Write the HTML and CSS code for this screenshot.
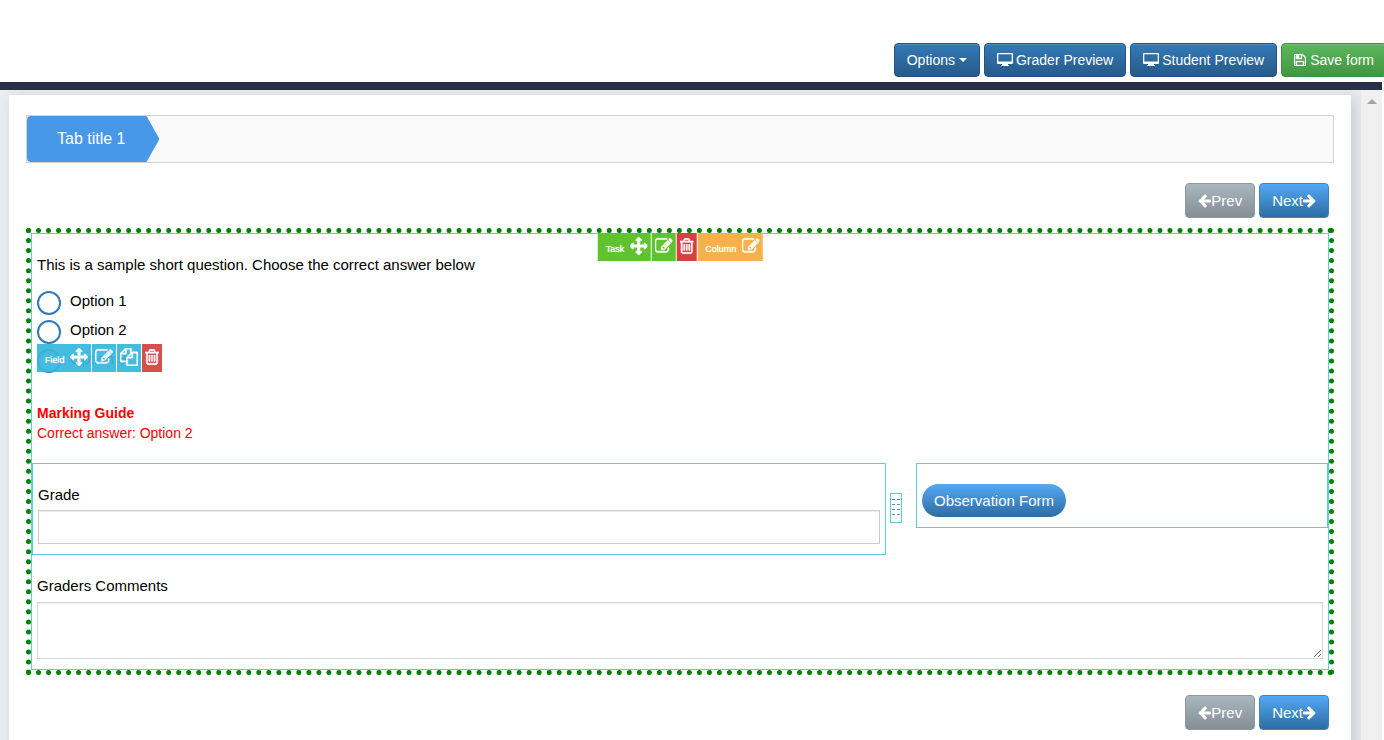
FILE: index.html
```
<!DOCTYPE html>
<html lang="en">
<head>
<meta charset="utf-8">
<title>Form builder</title>
<link rel="stylesheet" href="styles.css">
</head>
<body>
<svg class="sprite" aria-hidden="true">
  <symbol id="i-arrows" viewBox="0 0 1792 1792"><path d="M1792 896q0 26-19 45l-256 256q-19 19-45 19t-45-19-19-45v-128h-384v384h128q26 0 45 19t19 45-19 45l-256 256q-19 19-45 19t-45-19l-256-256q-19-19-19-45t19-45 45-19h128v-384h-384v128q0 26-19 45t-45 19-45-19l-256-256q-19-19-19-45t19-45l256-256q19-19 45-19t45 19 19 45v128h384v-384h-128q-26 0-45-19t-19-45 19-45l256-256q19-19 45-19t45 19l256 256q19 19 19 45t-19 45-45 19h-128v384h384v-128q0-26 19-45t45-19 45 19l256 256q19 19 19 45z"/></symbol>
  <symbol id="i-trash" viewBox="192 0 1408 1792"><path d="M704 736v576q0 14-9 23t-23 9h-64q-14 0-23-9t-9-23v-576q0-14 9-23t23-9h64q14 0 23 9t9 23zm256 0v576q0 14-9 23t-23 9h-64q-14 0-23-9t-9-23v-576q0-14 9-23t23-9h64q14 0 23 9t9 23zm256 0v576q0 14-9 23t-23 9h-64q-14 0-23-9t-9-23v-576q0-14 9-23t23-9h64q14 0 23 9t9 23zm128 724v-948h-896v948q0 22 7 40.5t14.5 27 10.5 8.5h832q3 0 10.5-8.5t14.5-27 7-40.5zm-672-1076h448l-48-117q-7-9-17-11h-317q-10 2-17 11zm928 32v64q0 14-9 23t-23 9h-96v948q0 83-47 143.5t-113 60.5h-832q-66 0-113-58.5t-47-141.5v-952h-96q-14 0-23-9t-9-23v-64q0-14 9-23t23-9h309l70-167q15-37 54-63t79-26h320q40 0 79 26t54 63l70 167h309q14 0 23 9t9 23z"/></symbol>
  <symbol id="i-edit" viewBox="0 0 1792 1792"><path d="M888 1184l116-116-152-152-116 116v56h96v96h56zm440-720q-16-16-33 1l-350 350q-17 17-1 33t33-1l350-350q17-17 1-33zm80 594v190q0 119-84.5 203.5t-203.5 84.5h-832q-119 0-203.5-84.5t-84.5-203.5v-832q0-119 84.5-203.5t203.5-84.5h832q63 0 117 25 15 7 18 23 3 17-9 29l-49 49q-14 14-32 8-23-6-45-6h-832q-66 0-113 47t-47 113v832q0 66 47 113t113 47h832q66 0 113-47t47-113v-126q0-13 9-22l64-64q15-15 35-7t20 29zm-96-738l288 288-672 672h-288v-288zm444 132l-92 92-288-288 92-92q28-28 68-28t68 28l152 152q28 28 28 68t-28 68z"/></symbol>
  <symbol id="i-copy" viewBox="0 0 1792 1792"><path d="M1696 384q40 0 68 28t28 68v1216q0 40-28 68t-68 28h-960q-40 0-68-28t-28-68v-288h-544q-40 0-68-28t-28-68v-672q0-40 20-88t48-76l408-408q28-28 76-48t88-20h416q40 0 68 28t28 68v328q68-40 128-40h416zm-544 213l-299 299h299v-299zm-640-384l-299 299h299v-299zm196 647l316-316v-416h-384v416q0 40-28 68t-68 28h-416v640h512v-256q0-40 20-88t48-76zm956 804v-1152h-384v416q0 40-28 68t-68 28h-416v640h896z"/></symbol>
  <symbol id="i-save" viewBox="128 128 1536 1536"><path d="M512 1536h768v-384h-768v384zm896 0h128v-896q0-14-10-38.5t-20-34.5l-281-281q-10-10-34-20t-39-10v416q0 40-28 68t-68 28h-576q-40 0-68-28t-28-68v-416h-128v1280h128v-416q0-40 28-68t68-28h832q40 0 68 28t28 68v416zm-384-928v-320q0-13-9.5-22.5t-22.5-9.5h-192q-13 0-22.5 9.5t-9.5 22.5v320q0 13 9.5 22.5t22.5 9.5h192q13 0 22.5-9.5t9.5-22.5zm640 32v928q0 40-28 68t-68 28h-1344q-40 0-68-28t-28-68v-1344q0-40 28-68t68-28h928q40 0 88 20t76 48l280 280q28 28 48 76t20 88z"/></symbol>
  <symbol id="i-left" viewBox="128 128 1536 1664"><path d="M1664 896v128q0 53-32.5 90.5t-84.5 37.5h-704l293 294q38 36 38 90t-38 90l-75 76q-37 37-90 37-52 0-91-37l-651-652q-37-37-37-90 0-52 37-91l651-650q38-38 91-38 52 0 90 38l75 74q38 38 38 91t-38 91l-293 293h704q52 0 84.5 37.5t32.5 90.5z"/></symbol>
  <symbol id="i-desktop" viewBox="0 0 16 14"><path fill-rule="evenodd" d="M1 0h14q1 0 1 1v9q0 1-1 1h-4v1q1 0 1 1H4q0-1 1-1v-1H1q-1 0-1-1V1q0-1 1-1zM1.300 1.300v7.200h13.400V1.300z"/></symbol>
</svg>

<header class="topbar">
  <div class="actions">
    <button class="btn primary menu" type="button">Options <span class="caret"></span></button>
    <button class="btn primary" type="button"><svg class="desktop"><use href="#i-desktop"/></svg>Grader Preview</button>
    <button class="btn primary" type="button"><svg class="desktop"><use href="#i-desktop"/></svg>Student Preview</button>
    <button class="btn success" type="button"><svg class="save"><use href="#i-save"/></svg>Save form</button>
  </div>
</header>

<div class="workspace">
  <main class="canvas">
    <section class="sheet">
      <nav class="tabs"><a class="tab" href="#tab1">Tab title 1</a></nav>

      <div class="pager">
        <button class="nav prev" type="button"><svg class="arrow"><use href="#i-left"/></svg>Prev</button>
        <button class="nav next" type="button">Next<svg class="arrow flip"><use href="#i-left"/></svg></button>
      </div>

      <form class="task" id="tab1">
        <div class="column">
          <div class="tools task-tools">
            <button class="tool green wide" type="button">Task<svg><use href="#i-arrows"/></svg></button>
            <button class="tool green" type="button" aria-label="Edit task"><svg><use href="#i-edit"/></svg></button>
            <button class="tool red" type="button" aria-label="Delete task"><svg class="trash"><use href="#i-trash"/></svg></button>
            <button class="tool orange wide" type="button">Column<svg><use href="#i-edit"/></svg></button>
          </div>

          <fieldset class="question">
            <legend>This is a sample short question. Choose the correct answer below</legend>
            <label class="option"><input type="radio" name="answer"><span>Option 1</span></label>
            <label class="option"><input type="radio" name="answer"><span>Option 2</span></label>
            <label class="option"><input type="radio" name="answer"><span>Option 3</span></label>
            <div class="tools field-tools">
              <button class="tool blue wide" type="button">Field<svg><use href="#i-arrows"/></svg></button>
              <button class="tool blue" type="button" aria-label="Edit field"><svg><use href="#i-edit"/></svg></button>
              <button class="tool blue" type="button" aria-label="Copy field"><svg><use href="#i-copy"/></svg></button>
              <button class="tool red" type="button" aria-label="Delete field"><svg class="trash"><use href="#i-trash"/></svg></button>
            </div>
          </fieldset>

          <div class="guide"><strong>Marking Guide</strong><span>Correct answer: Option 2</span></div>

          <div class="split">
            <div class="cell">
              <label for="grade">Grade</label>
              <input class="text" id="grade" type="text">
            </div>
            <svg class="grip" viewBox="0 0 12 30" aria-hidden="true">
              <rect x=".5" y=".5" width="11" height="29"/>
              <path d="M2 6.500h3M7 6.500h3M2 11.500h3M7 11.500h3M2 16.500h3M7 16.500h3M2 21.500h3M7 21.500h3"/>
            </svg>
            <div class="cell side">
              <button class="pill" type="button">Observation Form</button>
            </div>
          </div>

          <div class="comments">
            <label for="comments">Graders Comments</label>
            <textarea id="comments"></textarea>
          </div>
        </div>
      </form>

      <div class="pager">
        <button class="nav prev" type="button"><svg class="arrow"><use href="#i-left"/></svg>Prev</button>
        <button class="nav next" type="button">Next<svg class="arrow flip"><use href="#i-left"/></svg></button>
      </div>
    </section>
  </main>
  <div class="scroll"><span class="scroll-up"></span></div>
</div>
</body>
</html>
```
FILE: styles.css
```
* { box-sizing: border-box; }

body {
  margin: 0;
  height: 100vh;
  overflow: hidden;
  display: flex;
  flex-direction: column;
  background: #fff;
  color: #000;
  font: 15px/20px "Liberation Sans", Arial, sans-serif;
}

button { font-family: inherit; cursor: pointer; }
svg { fill: currentColor; flex: none; }
.sprite { display: none; }

/* Top bar */
.topbar {
  flex: none;
  padding-top: 43px;
  margin-right: 2px;
  border-bottom: 8px solid #263047;
}

.actions {
  display: flex;
  justify-content: flex-end;
  gap: 4px;
  margin: 0 -5px 5px 0;
}

.btn {
  display: flex;
  align-items: center;
  gap: 3px;
  height: 34px;
  padding: 0 12px;
  border: 1px solid #245580;
  border-radius: 4px;
  color: #fff;
  font-size: 14px;
  line-height: 20px;
  white-space: nowrap;
  box-shadow: inset 0 1px 0 rgba(255, 255, 255, .15);
}

.primary { background: linear-gradient(#337ab7, #265a88); }
.success { background: linear-gradient(#5cb85c, #419641); border-color: #3e8f3e; gap: 4px; }
.menu { gap: 4px; }
.caret { border: 4px solid transparent; border-top-color: #fff; border-bottom: 0; }
.desktop { width: 16px; height: 14px; }
.save { width: 12px; height: 12px; stroke: currentColor; stroke-width: 50px; }

/* Workspace */
.workspace {
  flex: 1;
  min-height: 0;
  display: flex;
  margin-right: 2px;
}

.canvas {
  flex: 1;
  padding: 5px 10px 0 9px;
  overflow: hidden;
  background: #ebeef1;
}

.sheet {
  padding: 20px 17px;
  min-height: 700px;
  background: #fff;
  box-shadow: 5px 2px 16px rgba(0, 0, 0, .15);
}

.scroll {
  width: 21px;
  background: #f0f0f0;
  display: flex;
  justify-content: center;
  padding-top: 9px;
}

.scroll-up {
  height: 5px;
  border: 5px solid transparent;
  border-top: 0;
  border-bottom-color: #a3a3a3;
}

/* Tabs and pager */
.tabs {
  display: flex;
  height: 48px;
  background: #f9f9f9;
  border: 1px solid #d4d4d4;
}

.tab {
  display: flex;
  align-items: center;
  padding: 0 34px 0 30px;
  border-radius: 4px 0 0 4px;
  background: #4898e8;
  clip-path: polygon(0 0, calc(100% - 13px) 0, 100% 50%, calc(100% - 13px) 100%, 0 100%);
  color: #fff;
  font-size: 16px;
  text-decoration: none;
}

.pager {
  display: flex;
  justify-content: flex-end;
  gap: 4px;
  padding: 20px 5px 10px;
}

.nav {
  display: flex;
  align-items: center;
  height: 35px;
  padding: 0 12px;
  border: 1px solid #2d6ca2;
  border-radius: 4px;
  color: #fff;
  font-size: 15px;
}

.prev { background: linear-gradient(#aab7bf, #848e93); border-color: #8f999e; }
.next, .pill { background: linear-gradient(#54a8f5, #2d6ca2); }
.next { border-color: #3d84c4; }
.arrow { width: 13px; height: 14px; }
.flip { transform: scaleX(-1); }

/* Task */
.task { border: 5px dotted green; }

.column {
  position: relative;
  border: 1px solid #5bd0d0;
  padding: 21px 0 10px;
}

.tools { position: absolute; display: flex; gap: 1px; background: #fff; }
.task-tools { top: -1px; left: 50%; transform: translateX(-50%); }
.field-tools { left: 0; bottom: 3px; opacity: .93; }

.tool {
  display: flex;
  align-items: center;
  gap: 5px;
  height: 28px;
  padding: 0 3px;
  border: 0;
  color: #fff;
  font-size: 9px;
  line-height: 12px;
  text-shadow: 0 0 1px #fff;
}

.tool svg {
  width: 18px;
  height: 18px;
  margin-bottom: 2px;
  stroke: currentColor;
  stroke-width: 50px;
}
.tool .trash { width: 14px; }
.tool.wide { padding: 4px 3px 0 8px; }
.tool.wide svg { margin-bottom: 6px; }
.green { background: #5fc22e; }
.red { background: #d64040; }
.orange { background: #f8b04c; }
.blue { background: #36b8dd; }

.question {
  position: relative;
  margin: 0 5px;
  padding: 0;
  border: 0;
}

.question legend { padding: 0; margin-bottom: 13px; }

.option { display: flex; align-items: center; gap: 9px; height: 29px; }
.option input {
  appearance: none;
  width: 24px;
  height: 24px;
  margin: 0;
  border: 2px solid #337ab7;
  border-radius: 50%;
  background: #fff;
}
.option span { padding-bottom: 4px; }

.guide {
  display: flex;
  flex-direction: column;
  margin: 28px 5px 20px;
  color: #f00;
  font-size: 14px;
}

.split {
  display: grid;
  grid-template-columns: 854fr 30px 412fr;
  align-items: start;
}

.cell { border: 1px solid #5bd0d0; padding: 21px 5px 10px; }
.cell label, .comments label { display: block; margin-bottom: 5px; }
.side { padding: 20px 5px 10px; }

.text, textarea {
  display: block;
  width: 100%;
  border: 1px solid #ccc;
  background: #fff;
  box-shadow: inset 0 1px 1px rgba(0, 0, 0, .075);
  font: inherit;
}
.text { height: 34px; }
textarea { height: 57px; border-color: #d8d8d8; resize: vertical; }

.grip { width: 12px; height: 30px; margin: 30px 0 0 4px; }
.grip rect { fill: #fff; stroke: #5bd0d0; }
.grip path { fill: none; stroke: #5f9b94; }

.pill {
  height: 33px;
  padding: 0 12px;
  border: 0;
  border-radius: 17px;
  color: #fff;
  font-size: 15px;
}

.comments { padding: 21px 5px 0; }
.comments label { margin-bottom: 6px; }
```
